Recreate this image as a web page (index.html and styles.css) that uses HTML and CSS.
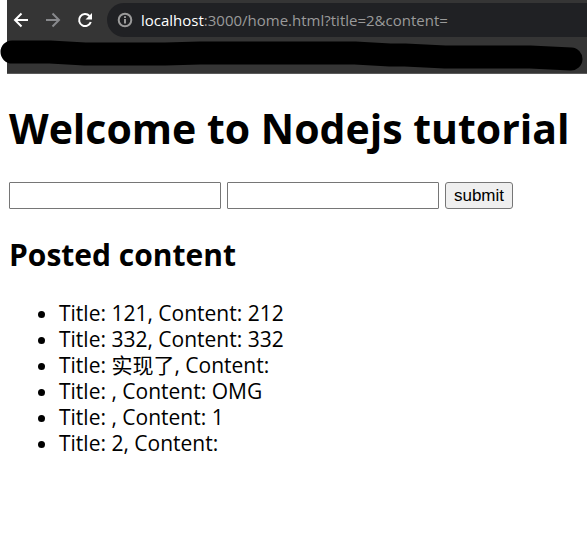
FILE: index.html
```html
<!DOCTYPE html>
<html lang="en">
<head>
<meta charset="utf-8">
<title>Nodejs tutorial</title>
<link rel="stylesheet" href="styles.css">
</head>
<body>
<header class="browser">
  <nav class="toolbar" aria-label="Browser">
    <button class="nav" aria-label="Back"><svg viewBox="0 0 16 16"><path d="M15 8H2.500M8.500 1.500 2 8l6.500 6.500"/></svg></button>
    <button class="nav dim" aria-label="Forward"><svg viewBox="0 0 16 16"><path d="M1 8h12.500M7.500 1.500 14 8l-6.500 6.500"/></svg></button>
    <button class="nav" aria-label="Reload"><svg viewBox="0 0 16 16"><path d="M13.800 10A6 6 0 1 1 12.500 4"/><path class="fill" d="M15 1v6.500H8.500z"/></svg></button>
    <div class="address">
      <svg class="info" viewBox="0 0 16 16"><circle cx="8" cy="8" r="6.300"/><path d="M8 7v4.500M8 4.300v1.700"/></svg>
      <span class="url"><span class="host">localhost</span>:3000/home.html?title=2&amp;content=</span>
    </div>
  </nav>
  <svg class="scribble" viewBox="0 0 587 33" preserveAspectRatio="none" aria-hidden="true"><path d="M12 12H50L85 14H165L200 13H355L390 15H405L445 17H530L571 19"/></svg>
</header>
<main>
  <h1>Welcome to Nodejs tutorial</h1>
  <form>
    <input type="text" aria-label="Title">
    <input type="text" aria-label="Content">
    <button class="submit" type="button">submit</button>
  </form>
  <h2>Posted content</h2>
  <ul>
    <li>Title: 121, Content: 212</li>
    <li>Title: 332, Content: 332</li>
    <li>Title: 实现了, Content:</li>
    <li>Title: , Content: OMG</li>
    <li>Title: , Content: 1</li>
    <li>Title: 2, Content:</li>
  </ul>
</main>
</body>
</html>
```
FILE: styles.css
```css
* { box-sizing: border-box; }
body { margin: 0; background: #fff; color: #000; font: 21px/26px "Open Sans", "Noto Sans CJK SC", sans-serif; }
.browser { margin-left: 7px; border-bottom: 1px solid #5a5a5a; background: #353535; }
.toolbar { display: flex; align-items: center; height: 40px; }
.nav { width: 32px; padding: 0 4px 0 0; border: 0; background: none; line-height: 0; }
.nav svg { width: 16px; height: 16px; fill: none; stroke: #fff; stroke-width: 2; }
.nav .fill { fill: #fff; stroke: none; }
.nav.dim svg { stroke: #88898c; }
.address { display: flex; align-items: center; gap: 8px; flex: 1; height: 34px; margin-left: 4px; padding-left: 10px; border-radius: 17px 0 0 17px; background: #202124; }
.info { width: 16px; height: 16px; fill: none; stroke: #9a9a9a; stroke-width: 2; }
.url { color: #9a9a9a; font-size: 15px; line-height: 20px; }
.host { color: #fff; }
.scribble { display: block; width: calc(100% + 7px); height: 33px; margin-left: -7px; fill: none; stroke: #000; stroke-width: 23; stroke-linecap: round; stroke-linejoin: round; }
main { padding: 0 9px; }
h1 { margin: 26px 0 25px; font-size: 41px; line-height: 57px; }
form { display: flex; gap: 6px; }
input { width: 212px; height: 27px; border: 1px solid #767676; border-radius: 1px; }
.submit { width: 68px; height: 27px; padding: 0; border: 1px solid #767676; border-radius: 3px; background: #efefef; font: 17px "Liberation Sans", sans-serif; }
h2 { margin: 25px 0 24px; font-size: 30px; line-height: 42px; }
ul { margin: 0; padding-left: 50px; }
```
